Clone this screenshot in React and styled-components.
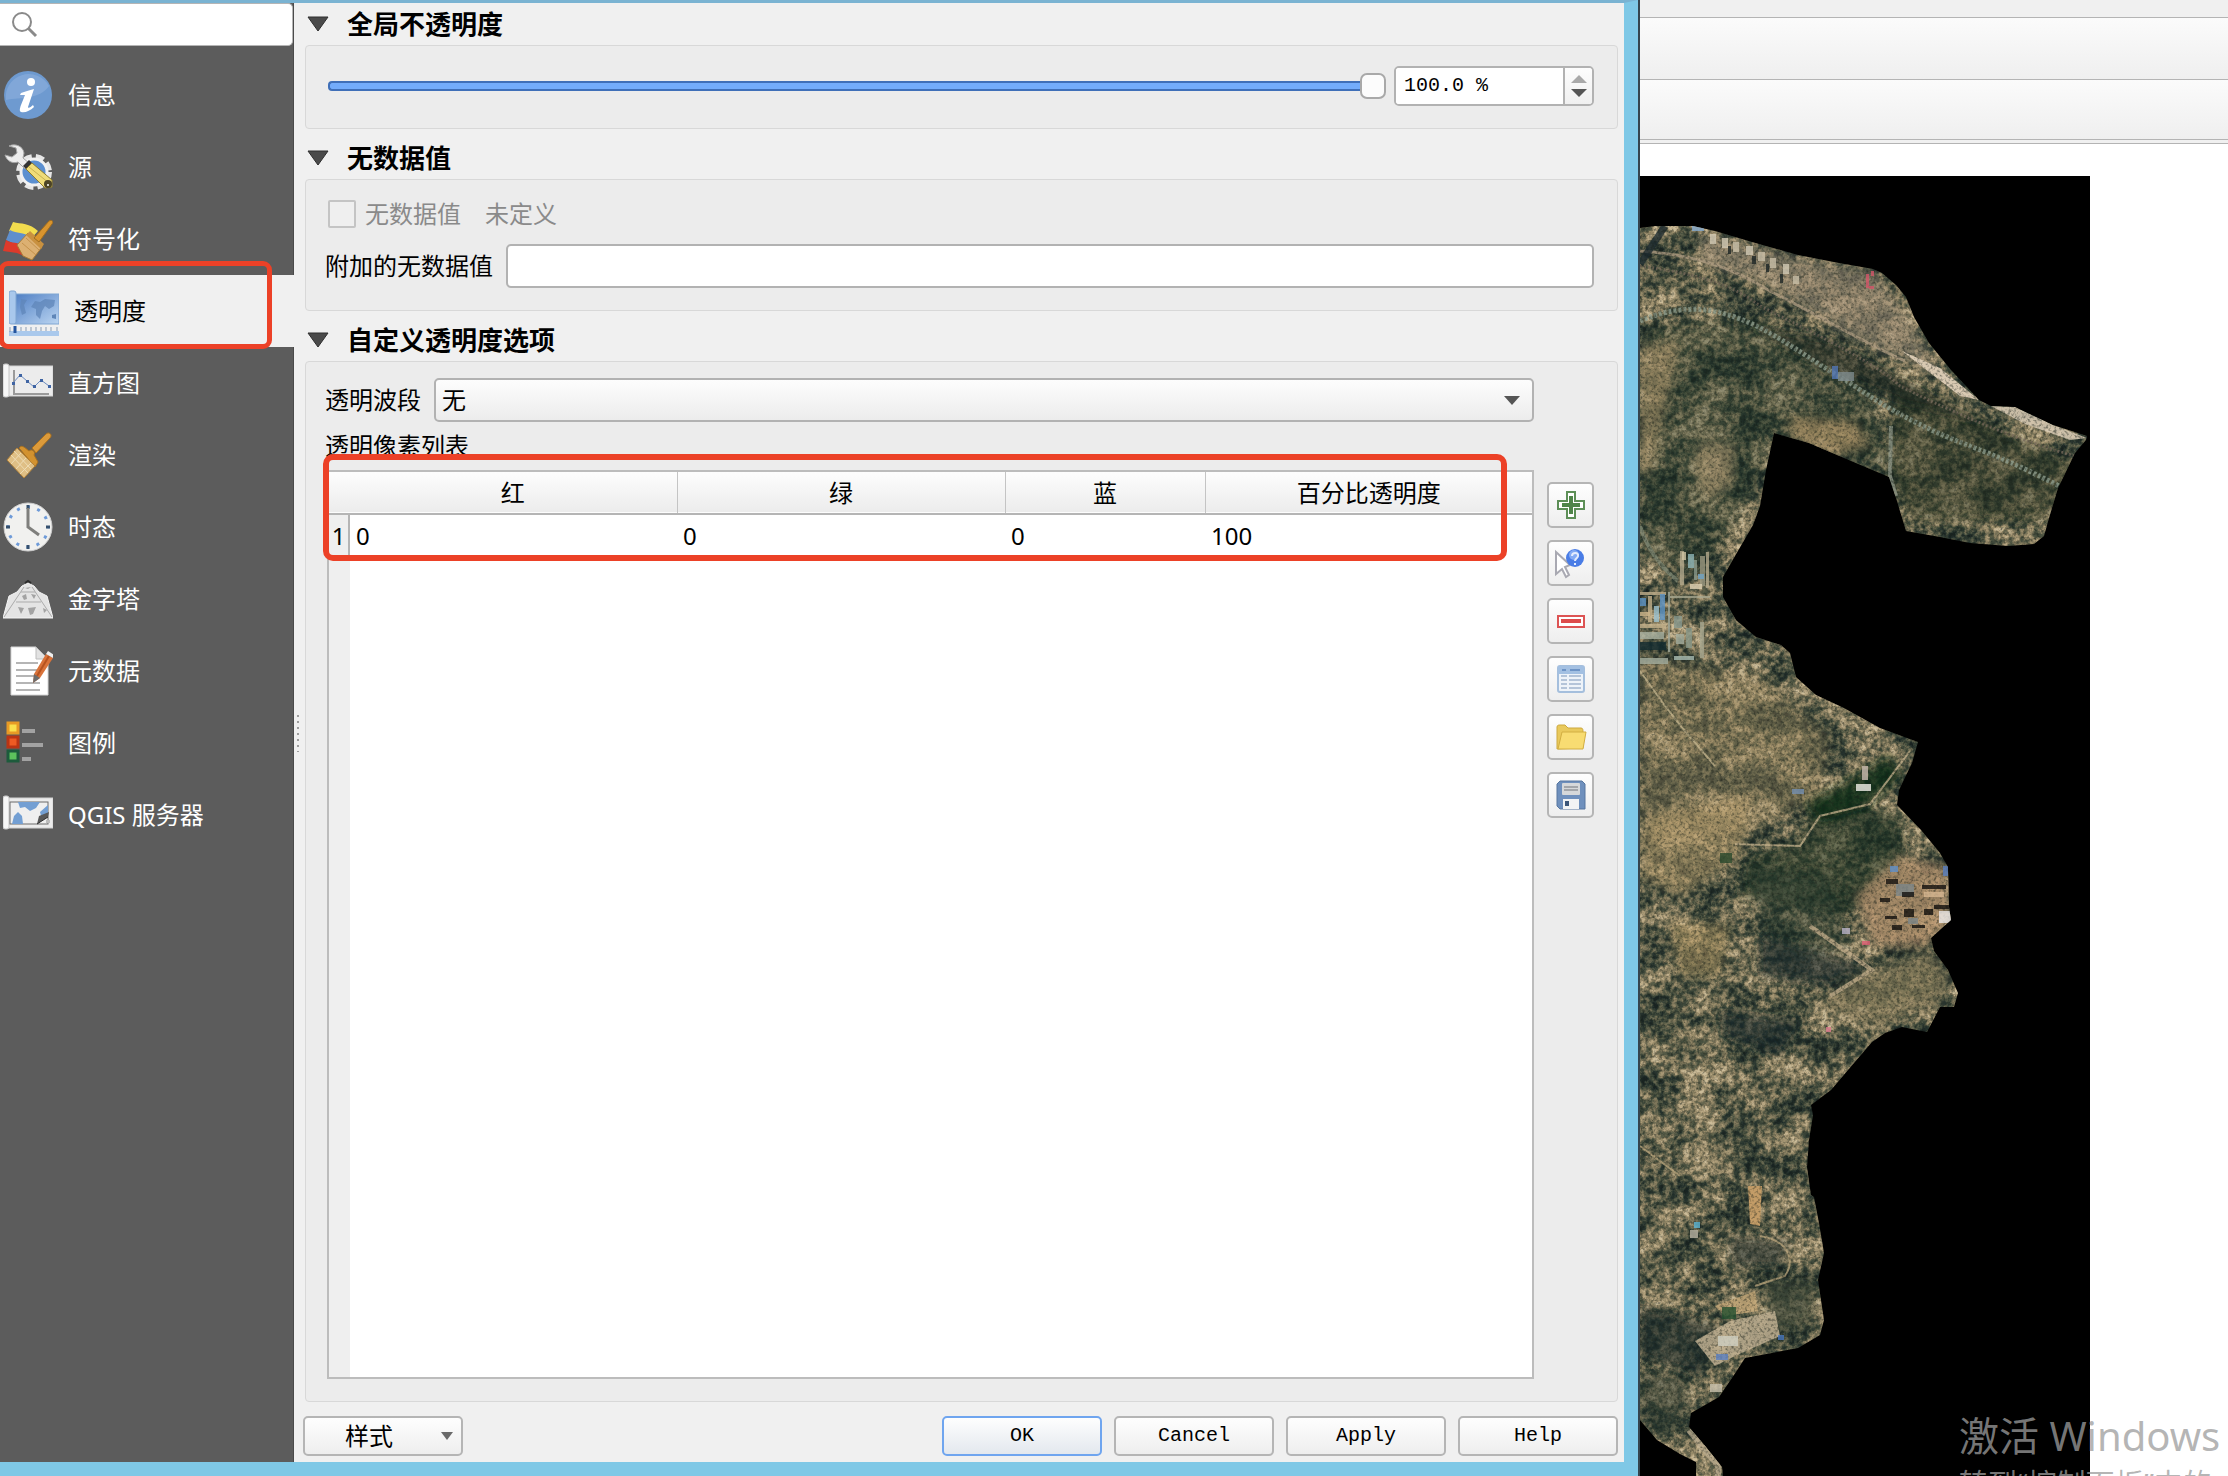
import { useState } from 'react';
import styled, { createGlobalStyle, css } from 'styled-components';

const GlobalStyle = createGlobalStyle`
    *, *::before, *::after {
        box-sizing: border-box;
    }

    body {
        margin: 0;
        overflow: hidden;
        background: #fff;
        color: #000;
        font-family: "Noto Sans", "Noto Sans CJK SC", sans-serif;
        font-size: 24px;
        line-height: 32px;
    }

    button, input, select {
        margin: 0;
        font: inherit;
        color: inherit;
    }
`

/* ---------- sidebar icons ---------- */

const Sheet = ({ children }) => (
    <>
        <path d="M6 8H50V38H4V8Z" fill="#ececec" stroke="#d2d2d2" />
        <rect x="0" y="6" width="6" height="33" rx="2" fill="#f7f7f7" stroke="#c6c6c6" />
        {children}
    </>
)

const icons = {
    info: (
        <>
            <circle cx="25" cy="25" r="24" fill="#6e9ad0" />
            <path d="M3 30A23 23 0 0 1 46 16C36 30 18 27 3 30Z" fill="#8db0de" opacity="0.6" />
            <circle cx="28" cy="12" r="4" fill="#fff" />
            <path d="M18 23C22 22 26 20 31 19L25 37C25 39 28 37 30 35L31 37C27 41 22 43 18 42C16 41 17 38 18 35L22 25L17 25Z" fill="#fff" />
        </>
    ),
    source: (
        <>
            <circle cx="31" cy="30" r="15" fill="none" stroke="#e6e6e6" strokeWidth="6" strokeDasharray="8 4" />
            <circle cx="31" cy="30" r="13" fill="#5b8fd0" stroke="#f1f1f1" strokeWidth="3" />
            <path d="M6 4C12 1 20 4 21 11L20 16L27 22L22 27L15 20C9 22 4 19 2 13L9 15L14 11L13 6Z" fill="#ececec" stroke="#a5a5a5" />
            <path d="M20 24L26 18L30 22L24 28Z" fill="#333" />
            <path d="M23 27L29 21L49 38L49 45L42 46Z" fill="#efdc79" stroke="#8f7d2f" />
            <path d="M26 25L46 41" stroke="#c9b24f" strokeWidth="1" />
            <circle cx="45" cy="42" r="4" fill="#4c4426" />
            <circle cx="45" cy="43" r="1" fill="#fff" />
        </>
    ),
    symbology: (
        <>
            <path d="M10 8C18 10 27 9 35 17L27 26L6 17Z" fill="#f2dc4e" />
            <path d="M7 16C14 20 20 17 28 24L20 34L3 26Z" fill="#5f8fcd" />
            <path d="M3 26C9 30 15 27 21 33L26 44L14 39L0 37Z" fill="#dd3a2b" />
            <path d="M14 31L25 19L39 33L29 46L20 42Z" fill="#dcb072" stroke="#a87b34" />
            <path d="M19 29L33 41M23 24L36 36" stroke="#c4924c" />
            <path d="M23 21L27 17L41 30L38 35Z" fill="#c99140" />
            <path d="M31 24L46 7C49 5 51 8 49 10L36 28Z" fill="#d9942e" stroke="#a06d1f" />
        </>
    ),
    transparency: (
        <>
            <defs>
                <linearGradient id="sky" x1="0" y1="0" x2="1" y2="1">
                    <stop offset="0" stopColor="#4f7fc4" />
                    <stop offset="1" stopColor="#bcd6f2" />
                </linearGradient>
            </defs>
            <rect x="6" y="8" width="44" height="30" fill="url(#sky)" stroke="#7fa5d2" />
            <path d="M22 21L26 15L31 16L36 13L46 14L45 20L40 23L36 20L33 25L31 33L27 29L27 23ZM12 13L18 14L15 19L17 27L13 29L11 21Z" fill="#5f86b8" opacity="0.75" />
            <path d="M43 29L47 28L47 33L43 32Z" fill="#5f86b8" />
            <rect x="0" y="5" width="7" height="33" rx="2" fill="#a9c8ec" stroke="#7fa5d2" />
            <rect x="0" y="45" width="50" height="5" fill="#aac9ec" />
            <path d="M1 41V46M12 41V45M17 41V45M22 41V45M27 41V45M32 41V45M37 41V45M42 41V45M48 41V45" stroke="#8a9db5" />
            <path d="M6 40V47" stroke="#24559f" strokeWidth="3" />
        </>
    ),
    histogram: (
        <Sheet>
            <path d="M11 12V36H46" fill="none" stroke="#9a9a9a" strokeWidth="2" />
            <path d="M10 25L17 17L24 23L31 29L38 22L46 28" fill="none" stroke="#6d8cc0" />
            <path d="M9 24h3v3h-3zM16 16h3v3h-3zM23 22h3v3h-3zM30 27h3v3h-3zM37 21h3v3h-3zM45 27h3v3h-3z" fill="#3f64a3" />
        </Sheet>
    ),
    rendering: (
        <>
            <path d="M29 18L43 4C46 1 50 5 47 8L33 23Z" fill="#dc9a3a" stroke="#a8701f" />
            <path d="M16 18C19 14 22 18 26 21C29 18 33 22 31 25L35 32L32 37Z" fill="#d3922f" stroke="#a8701f" />
            <path d="M14 18L32 36L21 48L4 30Z" fill="#dfbf85" stroke="#b28138" />
            <path d="M11 21L28 39M8 25L25 43M18 23L8 34M23 28L13 39M28 33L17 44" stroke="#eedcb4" />
        </>
    ),
    temporal: (
        <>
            <circle cx="25" cy="25" r="24" fill="#f1f1ef" stroke="#d0d0d0" />
            <circle cx="25" cy="25" r="20" fill="none" stroke="#6f9bd8" strokeWidth="3" strokeDasharray="3 7.47" strokeDashoffset="1.5" />
            <path d="M25 3v4M25 43v4M3 25h4M43 25h4" stroke="#35506e" strokeWidth="3" />
            <path d="M25 6V25L36 33" fill="none" stroke="#7f7f7c" strokeWidth="3" />
        </>
    ),
    pyramids: (
        <>
            <path d="M0 44L6 22L14 18L19 12L25 9L31 12L36 18L44 22L50 44Z" fill="#e4e4e4" stroke="#f4f4f4" />
            <path d="M22 9L25 7L28 9" fill="none" stroke="#2c2c2c" strokeWidth="2" />
            <path d="M1 43L21 13M49 43L29 13M13 28H38M18 18H32" fill="none" stroke="#ababab" />
            <path d="M19 22l4-2 1 5-3 1zM28 20l5 1-2 4zM15 33l6 1-3 6zM25 34l8-1-3 7-3 1zM40 34l4 2-3 3zM22 14l3 1 3-2" fill="#a3a3a3" />
        </>
    ),
    metadata: (
        <>
            <path d="M8 1H33L45 13V49H8Z" fill="#fff" stroke="#d6d6d6" />
            <path d="M33 1V13H45Z" fill="#e2e2e2" stroke="#bcbcbc" />
            <path d="M13 17H35M13 24H34M13 30H32M13 37H37M13 44H37" stroke="#b5b5b5" strokeWidth="2" />
            <path d="M43 8L50 12L37 32L30 37L31 28Z" fill="#d9733a" />
            <path d="M46 10L34 30" stroke="#b6521f" strokeWidth="2" />
            <path d="M43 8L45 5L51 9L50 12Z" fill="#efefef" />
            <path d="M31 28L37 32L30 37Z" fill="#6c6c6c" />
        </>
    ),
    legend: (
        <>
            <rect x="5" y="5" width="10" height="10" fill="#fbe04c" stroke="#e89a25" strokeWidth="3" />
            <rect x="5" y="19" width="10" height="10" fill="#ee5a23" stroke="#b93414" strokeWidth="3" />
            <rect x="5" y="33" width="10" height="10" fill="#5cc25c" stroke="#1d5b3c" strokeWidth="3" />
            <path d="M19 13H32M19 27H40M19 41H28" stroke="#a2a2a2" strokeWidth="4" />
        </>
    ),
    server: (
        <Sheet>
            <rect x="7" y="12" width="38" height="22" fill="#efefef" stroke="#6b6b6b" />
            <path d="M15 12H37L33 18L27 21L22 17L17 18ZM9 34L11 26L15 22L19 26L20 34ZM37 22L45 15V24L38 26Z" fill="#739fd3" />
            <path d="M34 34L36 26L46 22L45 27Z" fill="#585858" />
            <path d="M34 34L45 27" stroke="#2e2e2e" />
            <path d="M43 30H47V33H43Z" fill="#bdbdbd" />
        </Sheet>
    ),
}

/* ---------- tool button icons ---------- */

const tools = [
    {
        label: '添加',
        icon: (
            <>
                <path d="M10 1H18V10H27V18H18V27H10V18H1V10H10Z" fill="#fff" stroke="#5d8f57" strokeWidth="2" />
                <path d="M14 5V23M5 14H23" stroke="#4f8549" strokeWidth="4" />
            </>
        ),
    },
    {
        label: '拾取',
        icon: (
            <>
                <path d="M-1 3L13 16L8 18L12 26L9 28L5 20L-1 25Z" fill="#fff" stroke="#a9a9b2" strokeWidth="2" />
                <circle cx="18" cy="9" r="9" fill="#4a7de6" />
                <circle cx="17" cy="6" r="5" fill="#84abf5" />
                <path d="M15 7C15 3 22 3 21 7C21 9 18 9 18 12M18 14V16" fill="none" stroke="#e4ecfd" strokeWidth="2" />
            </>
        ),
    },
    {
        label: '删除',
        icon: (
            <>
                <rect x="1" y="9" width="26" height="11" fill="#fff" stroke="#dd5454" strokeWidth="2" />
                <path d="M4 14H24" stroke="#dd4b4b" strokeWidth="4" />
            </>
        ),
    },
    {
        label: '默认值',
        icon: (
            <>
                <rect x="1" y="1" width="26" height="26" rx="2" fill="#eef3f9" stroke="#a5bfdd" strokeWidth="2" />
                <path d="M1 1H27V9H1Z" fill="#a3c0e2" />
                <path d="M5 5H9M13 5H23" stroke="#6e94c6" strokeWidth="2" />
                <path d="M4 11H10M12 11H24M4 15H10M12 15H24M4 19H10M12 19H24M4 23H10M12 23H24" stroke="#b4c4d9" strokeWidth="2" />
            </>
        ),
    },
    {
        label: '打开',
        icon: (
            <>
                <path d="M0 26V4C0 2 2 2 3 2H8L11 5H24C26 5 26 7 26 9V25Z" fill="#e9c95c" stroke="#cda93e" />
                <path d="M1 26L5 9H29L26 26Z" fill="#f8dc72" stroke="#d2ae42" />
            </>
        ),
    },
    {
        label: '保存',
        icon: (
            <>
                <path d="M3 0H25L28 3V28H3L0 25V3Z" fill="#6f90bd" stroke="#58779f" />
                <rect x="5" y="2" width="18" height="12" rx="1" fill="#d6d8da" />
                <path d="M7 6H21M7 9H21" stroke="#a3a6aa" strokeWidth="2" />
                <rect x="6" y="18" width="16" height="10" fill="#f2f3f4" />
                <rect x="8" y="20" width="4" height="5" fill="#3c5678" />
            </>
        ),
    },
]

const menu = [
    { key: 'info', label: '信息' },
    { key: 'source', label: '源' },
    { key: 'symbology', label: '符号化' },
    { key: 'transparency', label: '透明度' },
    { key: 'histogram', label: '直方图' },
    { key: 'rendering', label: '渲染' },
    { key: 'temporal', label: '时态' },
    { key: 'pyramids', label: '金字塔' },
    { key: 'metadata', label: '元数据' },
    { key: 'legend', label: '图例' },
    { key: 'server', label: 'QGIS 服务器' },
]

const Sidebar = () => (
    <SidebarWrapper>
        <SearchBox>
            <svg width="26" height="26" viewBox="0 0 26 26" fill="none" stroke="#8a8a8a">
                <circle cx="10" cy="10" r="9" strokeWidth="2" />
                <path d="M16 16L24 24" strokeWidth="3" />
            </svg>
            <input type="search" aria-label="搜索" />
        </SearchBox>
        <Menu>
            {menu.map(item => (
                <MenuItem key={item.key} $active={item.key === 'transparency'}>
                    <a href={`#${item.key}`}>
                        <svg width="50" height="50" viewBox="0 0 50 50">{icons[item.key]}</svg>
                        {item.label}
                    </a>
                </MenuItem>
            ))}
        </Menu>
    </SidebarWrapper>
)

const Section = ({ title, grow, children }) => (
    <>
        <SectionTitle>
            <svg width="22" height="16" viewBox="0 0 22 16">
                <path d="M1 1H21L11 15Z" fill="#4a4a4a" stroke="#2f2f2f" />
            </svg>
            {title}
        </SectionTitle>
        <Group $grow={grow}>{children}</Group>
    </>
)

const PixelTable = () => (
    <TableFrame>
        <table>
            <colgroup>
                <col width="20" />
                <col width="328" />
                <col width="328" />
                <col width="200" />
                <col />
            </colgroup>
            <thead>
                <tr>
                    <td></td>
                    <th>红</th>
                    <th>绿</th>
                    <th>蓝</th>
                    <th>百分比透明度</th>
                </tr>
            </thead>
            <tbody>
                <tr>
                    <th>1</th>
                    <td>0</td>
                    <td>0</td>
                    <td>0</td>
                    <td>100</td>
                </tr>
            </tbody>
        </table>
        <TableMark />
    </TableFrame>
)

/* ---------- satellite map ---------- */

const outline = `M0 52L15 50L53 50L75 55L112 66L158 79L199 87L233 93L242 97L256 109L266 121L274 141L289 167L311 194
    L339 224L351 230L375 231L413 249L447 260L446 264L435 277L418 312L409 342L404 360L394 368L368 370L330 367L300 361
    L266 355L257 325L249 301L204 282L169 267L134 257L126 294L120 330L113 349L95 380L83 401L83 421L96 444L116 461
    L141 469L150 477L156 501L176 519L204 532L240 552L278 566L272 587L259 614L257 629L281 654L300 677L308 691L309 731
    L311 744L302 752L291 762L294 775L308 794L318 817L314 831L300 831L287 856L262 851L245 857L232 866L214 887L191 914
    L171 929L173 939L169 964L167 991L171 1019L174 1021L179 1047L184 1077L178 1104L184 1144L180 1159L158 1172L105 1182
    L94 1199L79 1221L51 1237L49 1251L66 1271L82 1291L83 1300H56V1286L40 1278L17 1264L0 1244Z`

const patches = [
    // green hills
    { d: 'M10 150L120 140L230 215L260 300L140 260L100 340L60 400L0 380V200Z', fill: '#223528', opacity: 0.35 },
    { d: 'M255 205L440 290L405 345L270 345L250 300Z', fill: '#2a3624', opacity: 0.5 },
    { d: 'M110 150L190 165L300 225L350 250L260 225L180 190Z', fill: '#18211b', opacity: 0.6 },
    { d: 'M180 620L260 640L265 700L200 740L100 720L110 680L160 665Z', fill: '#1b3020', opacity: 0.55 },
    { d: 'M110 690L190 700L210 770L150 790L120 750Z', fill: '#22342a', opacity: 0.45 },
    { d: 'M190 615L250 580L260 600L225 632L180 645L165 625Z', fill: '#0f2e12', opacity: 0.75 },
    { d: 'M120 760L230 790L190 810L120 800ZM80 835L160 845L140 880L85 860Z', fill: '#17282a', opacity: 0.6 },
    { d: 'M0 1130L80 1150L60 1200L0 1180ZM90 1060L150 1065L140 1090L92 1090Z', fill: '#1c2c2a', opacity: 0.6 },
    { d: 'M125 1105L175 1105L172 1150L130 1155Z', fill: '#3c4737', opacity: 0.7 },
    { d: 'M0 1195L45 1200L50 1235L20 1260L0 1240Z', fill: '#20322c', opacity: 0.5 },
    // bare soil
    { d: 'M60 58L158 82L235 97L268 140L300 200L210 160L120 105L60 85Z', fill: '#a3927a', opacity: 0.6 },
    { d: 'M0 170L40 165L30 210L10 300L0 290Z', fill: '#bfa274', opacity: 0.5 },
    { d: 'M60 265L95 268L92 310L65 325L55 290Z', fill: '#b39c74', opacity: 0.6 },
    { d: 'M150 240L215 245L232 270L190 280L150 262Z', fill: '#b8996a', opacity: 0.6 },
    { d: 'M0 480L120 500L190 560L180 620L100 660L0 670Z', fill: '#a08c63', opacity: 0.4 },
    { d: 'M10 640L110 620L100 680L40 720L0 700Z', fill: '#bfa36f', opacity: 0.5 },
    { d: 'M30 745L90 750L80 800L40 800Z', fill: '#c0a26b', opacity: 0.5 },
    { d: 'M215 720L260 680L305 690L310 745L285 770L235 770Z', fill: '#bd9872', opacity: 0.75 },
    { d: 'M210 805L290 775L310 800L300 825L240 850L180 830Z', fill: '#8b7f5d', opacity: 0.6 },
    { d: 'M108 1010L122 1010L120 1050L110 1048Z', fill: '#c39c67', opacity: 1 },
    { d: 'M55 1165L90 1145L135 1135L140 1160L95 1180L75 1190Z', fill: '#c2b193', opacity: 0.85 },
    { d: 'M75 1130L115 1115L118 1135L85 1140Z', fill: '#c4a878', opacity: 0.8 },
    { d: 'M262 175L300 192L339 224L320 220Z', fill: '#d9c9b2', opacity: 1 },
    { d: 'M351 230L375 231L413 249L447 262L430 264L385 248Z', fill: '#dbcdb6', opacity: 0.85 },
]

const roads = [
    { d: 'M0 145C30 132 60 130 85 138C130 150 170 185 210 207C250 235 290 255 330 270C370 285 400 300 425 313', stroke: '#8d9c8c', width: 5, dash: '3 2' },
    { d: 'M0 75C50 78 90 90 130 115C180 140 230 170 265 185', stroke: '#ab9a80', width: 3 },
    { d: 'M0 90C60 98 95 110 120 130C180 160 240 190 260 210C320 240 380 265 435 280', stroke: '#75695a', width: 3, dash: '2 2' },
    { d: 'M251 250L250 300L256 320', stroke: '#8c9484', width: 4 },
    { d: 'M0 350C8 375 22 392 38 405', stroke: '#7d8672', width: 4 },
    { d: 'M0 495L25 530L45 555L75 590', stroke: '#c0b18b', width: 2 },
    { d: 'M95 668L160 670L180 640L230 628L270 575', stroke: '#c0ae8a', width: 2 },
    { d: 'M170 750L232 794L190 820', stroke: '#bda987', width: 4 },
    { d: 'M0 970L40 1000M120 1060C150 1065 155 1085 145 1100L115 1110', stroke: '#b7a37b', width: 2 },
    { d: 'M49 1254L78 1290V1300', stroke: '#b8a98c', width: 6 },
    { d: 'M25 50L0 88', stroke: '#1d2b30', width: 7 },
]

// [x, y, w, h, colour]
const buildings = [
    [70, 58, 6, 10, '#d3cab5'], [82, 62, 6, 10, '#d3cab5'], [93, 66, 6, 10, '#c9bfa8'], [106, 70, 7, 9, '#d3cab5'],
    [118, 76, 7, 9, '#c9bfa8'], [130, 82, 6, 10, '#c9bfa8'], [143, 88, 6, 10, '#d3cab5'], [153, 100, 6, 8, '#c9bfa8'],
    [88, 70, 3, 8, '#1b2424'], [112, 80, 4, 8, '#1b2424'], [126, 88, 3, 8, '#1b2424'], [140, 98, 3, 9, '#1b2424'],
    [226, 98, 3, 14, '#d5576a'], [231, 95, 3, 5, '#d5576a'], [229, 110, 5, 3, '#d5576a'], [192, 190, 6, 13, '#5277b5'],
    [198, 196, 16, 9, '#7d8a8c'], [52, 50, 12, 5, '#7fa6cc'],
    [40, 375, 4, 34, '#b3a98c'], [48, 378, 6, 14, '#8fb5b7'], [60, 380, 5, 30, '#9a977f'], [50, 408, 12, 5, '#dccfb2'],
    [42, 376, 4, 8, '#d0c4a4'], [54, 384, 3, 20, '#8b9a8b'], [66, 376, 3, 36, '#b3a98c'], [58, 398, 6, 5, '#6fa3c4'],
    [0, 416, 26, 3, '#bfae8b'], [20, 418, 5, 26, '#5b93c7'], [0, 422, 6, 8, '#5b93c7'], [14, 430, 5, 16, '#9bc2cf'],
    [8, 420, 4, 26, '#c6b38c'], [0, 436, 10, 4, '#cbb48a'], [28, 416, 2, 60, '#9fa89a'], [30, 420, 40, 2, '#a7a890'],
    [0, 448, 26, 4, '#c6b38c'], [0, 456, 24, 7, '#a7b0a0'], [0, 466, 26, 8, '#132a30'], [34, 440, 8, 12, '#87998e'],
    [46, 452, 6, 20, '#8b9a8b'], [36, 458, 8, 10, '#a2ad9e'], [60, 446, 4, 36, '#a7a890'], [0, 482, 28, 6, '#a7b0a0'],
    [34, 480, 20, 4, '#a9bcb1'],
    [216, 608, 15, 7, '#f1efe9'], [222, 590, 6, 14, '#cbbcb0'], [152, 613, 12, 5, '#7590b0'], [80, 677, 12, 10, '#2a4a2d'],
    [250, 690, 8, 6, '#5f8fc8'], [303, 690, 5, 10, '#5a7fc0'], [256, 708, 18, 12, '#7c8688'], [246, 703, 12, 5, '#14110f'],
    [240, 722, 10, 4, '#14110f'], [262, 716, 12, 5, '#14110f'], [282, 709, 24, 4, '#14110f'], [264, 733, 10, 8, '#14110f'],
    [284, 733, 9, 6, '#14110f'], [245, 740, 12, 3, '#14110f'], [252, 749, 10, 5, '#14110f'], [272, 749, 13, 3, '#14110f'],
    [294, 729, 16, 4, '#14110f'], [299, 735, 12, 12, '#ebe9e8'], [268, 742, 10, 6, '#7c8688'], [284, 716, 20, 5, '#d6b791'],
    [202, 752, 8, 6, '#b9b3c8'], [222, 765, 8, 4, '#d95a70'], [186, 851, 5, 5, '#d9798c'], [54, 1046, 6, 6, '#5fb6d4'],
    [50, 1054, 8, 8, '#b9b3a3'], [82, 1131, 14, 12, '#245030'], [76, 1178, 12, 6, '#5b7fc0'], [138, 1159, 6, 5, '#4a78bd'],
    [78, 1160, 20, 10, '#cfcfc2'], [70, 1208, 12, 8, '#c8c1ad'],
]

const SatelliteMap = () => (
    <svg width="450" height="1300" viewBox="0 0 450 1300" role="img" aria-label="卫星影像">
        <defs>
            <filter id="terrain" x="0" y="0" width="100%" height="100%" colorInterpolationFilters="sRGB">
                <feTurbulence type="fractalNoise" baseFrequency="0.024 0.034" numOctaves="5" seed="11" />
                <feColorMatrix values="2.6 0 0 0 -0.8  2.6 0 0 0 -0.8  2.6 0 0 0 -0.8  0 0 0 0 1" result="hills" />
                <feTurbulence type="fractalNoise" baseFrequency="0.16" numOctaves="4" seed="4" />
                <feColorMatrix values="2.6 0 0 0 -0.8  2.6 0 0 0 -0.8  2.6 0 0 0 -0.8  0 0 0 0 1" result="grain" />
                <feComposite in="hills" in2="grain" operator="arithmetic" k2="0.5" k3="0.5" />
                <feComponentTransfer>
                    <feFuncR type="table" tableValues="0.1 0.15 0.23 0.34 0.46 0.59 0.71 0.8" />
                    <feFuncG type="table" tableValues="0.14 0.2 0.27 0.36 0.44 0.54 0.64 0.74" />
                    <feFuncB type="table" tableValues="0.13 0.18 0.22 0.28 0.34 0.41 0.5 0.6" />
                </feComponentTransfer>
            </filter>
            <filter id="grainy" x="0" y="0" width="100%" height="100%" colorInterpolationFilters="sRGB">
                <feTurbulence type="fractalNoise" baseFrequency="0.35" numOctaves="2" seed="21" />
                <feColorMatrix values="0 0 0 0 0.1  0 0 0 0 0.13  0 0 0 0 0.1  3 0 0 0 -1.4" />
            </filter>
            <filter id="soft">
                <feGaussianBlur stdDeviation="5" />
            </filter>
            <clipPath id="coverage">
                <path d={outline} />
            </clipPath>
        </defs>
        <rect width="450" height="1300" fill="#000" />
        <g clipPath="url(#coverage)">
            <rect width="450" height="1300" filter="url(#terrain)" />
            {patches.map((p, i) => (
                <path key={i} d={p.d} fill={p.fill} opacity={p.opacity} filter={p.opacity < 0.8 ? 'url(#soft)' : undefined} />
            ))}
            {roads.map((r, i) => (
                <path key={i} d={r.d} fill="none" stroke={r.stroke} strokeWidth={r.width} strokeDasharray={r.dash} opacity="0.8" />
            ))}
            <rect width="450" height="1300" filter="url(#grainy)" opacity="0.5" />
            {buildings.map(([x, y, w, h, fill], i) => (
                <rect key={i} x={x} y={y} width={w} height={h} fill={fill} opacity="0.8" />
            ))}
        </g>
    </svg>
)

const App = () => {
    const [opacity, setOpacity] = useState(100);

    return (
        <Desktop>
            <GlobalStyle />
            <Dialog>
                <Sidebar />
                <Splitter>
                    <svg width="4" height="38" viewBox="0 0 4 38">
                        <path d="M1 1V38" stroke="#9d9d9d" strokeWidth="2" strokeDasharray="2 4" />
                    </svg>
                </Splitter>
                <Pane>
                    <Section title="全局不透明度">
                        <OpacityRow>
                            <Slider
                                type="range"
                                aria-label="不透明度"
                                min="0"
                                max="100"
                                value={opacity}
                                onChange={e => setOpacity(Number(e.target.value))}
                            />
                            <SpinBox>
                                <input type="text" aria-label="不透明度百分比" value={`${opacity.toFixed(1)} %`} readOnly />
                                <div>
                                    <StepButton aria-label="增加" onClick={() => setOpacity(Math.min(100, opacity + 1))}>
                                        <svg width="16" height="8" viewBox="0 0 16 8"><path d="M0 8L8 0L16 8Z" fill="#a9a9a9" /></svg>
                                    </StepButton>
                                    <StepButton aria-label="减少" onClick={() => setOpacity(Math.max(0, opacity - 1))}>
                                        <svg width="16" height="8" viewBox="0 0 16 8"><path d="M0 0H16L8 8Z" fill="#555" /></svg>
                                    </StepButton>
                                </div>
                            </SpinBox>
                        </OpacityRow>
                    </Section>

                    <Section title="无数据值">
                        <NoDataRow>
                            <input type="checkbox" id="nodata" disabled />
                            <label htmlFor="nodata">无数据值</label>
                            <span>未定义</span>
                        </NoDataRow>
                        <FieldRow>
                            <label htmlFor="extra">附加的无数据值</label>
                            <TextField id="extra" type="text" />
                        </FieldRow>
                    </Section>

                    <Section title="自定义透明度选项" grow>
                        <Custom>
                            <PixelArea>
                                <FieldRow>
                                    <label htmlFor="band">透明波段</label>
                                    <SelectBox>
                                        <select id="band">
                                            <option>无</option>
                                        </select>
                                        <svg width="16" height="9" viewBox="0 0 16 9"><path d="M0 0H16L8 9Z" fill="#555" /></svg>
                                    </SelectBox>
                                </FieldRow>
                                <ListLabel>透明像素列表</ListLabel>
                                <PixelTable />
                            </PixelArea>
                            <Tools>
                                {tools.map(tool => (
                                    <ToolButton key={tool.label} aria-label={tool.label}>
                                        <svg width="28" height="28" viewBox="0 0 28 28" overflow="visible">{tool.icon}</svg>
                                    </ToolButton>
                                ))}
                            </Tools>
                        </Custom>
                    </Section>

                    <Footer>
                        <StyleButton>
                            <span>样式</span>
                            <svg width="12" height="8" viewBox="0 0 12 8"><path d="M0 0H12L6 8Z" fill="#6a6a6a" /></svg>
                        </StyleButton>
                        <DialogButton $primary>OK</DialogButton>
                        <DialogButton>Cancel</DialogButton>
                        <DialogButton>Apply</DialogButton>
                        <DialogButton>Help</DialogButton>
                    </Footer>
                </Pane>
            </Dialog>
            <MapWindow>
                <Toolbar $height={18} $flat />
                <Toolbar $height={62} />
                <Toolbar $height={60} />
                <Toolbar $height={4} $flat />
                <Canvas>
                    <SatelliteMap />
                </Canvas>
                <Watermark>
                    <h2>激活 Windows</h2>
                    <p>转到“控制面板”中的</p>
                </Watermark>
            </MapWindow>
        </Desktop>
    );
}

const Desktop = styled.div`
    display: grid;
    grid-template-columns: minmax(0, 1fr) 590px;
    height: 100vh;
    overflow: hidden;
`

const Dialog = styled.div`
    display: grid;
    grid-template-columns: 294px 11px minmax(0, 1fr);
    min-height: 0;
    background: #f0f0f0;
    border: solid #7fc8e6;
    border-width: 3px 14px 14px 0;
    border-top-color: #7ab3d2;
    box-shadow: 2px 0 0 #35444d;
    z-index: 1;
`

const SidebarWrapper = styled.div`
    background: #5c5c5c;
    border-right: 1px solid #4a4a4a;
`

const SearchBox = styled.div`
    display: flex;
    align-items: center;
    height: 43px;
    padding-left: 12px;
    background: #fff;
    border: 1px solid #b5b5b5;
    border-left: 0;
    border-radius: 0 5px 5px 0;

    input {
        flex: 1;
        min-width: 0;
        border: 0;
        outline: 0;
        background: none;
    }
`

const Menu = styled.ul`
    margin: 13px 0 0;
    padding: 0;
    list-style: none;
`

const MenuItem = styled.li`
    a {
        display: flex;
        align-items: center;
        gap: 15px;
        height: 72px;
        padding-left: 3px;
        color: #fff;
        text-decoration: none;
    }

    ${props => props.$active && css`
        position: relative;
        margin-right: -1px;
        background: #f0f0f0;

        a {
            padding-left: 9px;
            color: #000;
        }

        &::after {
            content: '';
            position: absolute;
            top: -14px;
            left: -1px;
            width: 273px;
            height: 88px;
            border: 5px solid #ec4127;
            border-radius: 9px;
        }
    `}
`

const Splitter = styled.div`
    display: flex;
    align-items: center;
    padding-left: 3px;
`

const Pane = styled.div`
    display: flex;
    flex-direction: column;
    min-height: 0;
    padding-right: 6px;
`

const SectionTitle = styled.h3`
    display: flex;
    align-items: center;
    gap: 18px;
    height: 42px;
    margin: 8px 0 0;
    padding-left: 2px;
    font-size: 26px;
    font-weight: 700;

    &:first-child {
        margin-top: 0;
    }
`

const Group = styled.section`
    display: flex;
    flex-direction: column;
    gap: 16px;
    padding: 20px 23px 22px 19px;
    background: #ececec;
    border: 1px solid #d8d8d8;
    border-radius: 4px;
    ${props => props.$grow && css`
        flex: 1;
        min-height: 0;
        padding-top: 16px;
    `}
`

const OpacityRow = styled.div`
    display: flex;
    align-items: center;
    gap: 8px;
    padding-left: 3px;
`

const Slider = styled.input`
    flex: 1;
    height: 26px;
    appearance: none;
    background: none;

    &::-webkit-slider-runnable-track {
        height: 10px;
        background: #73acfb;
        border: 2px solid #3f6fb8;
        border-right: 0;
        border-radius: 4px;
    }

    &::-webkit-slider-thumb {
        appearance: none;
        width: 26px;
        height: 26px;
        margin-top: -10px;
        background: #fcfcfc;
        border: 2px solid #a9a9a9;
        border-radius: 7px;
    }
`

const SpinBox = styled.div`
    display: flex;
    width: 200px;
    height: 40px;
    background: #fff;
    border: 2px solid #b2b2b2;
    border-radius: 5px;
    overflow: hidden;

    input {
        flex: 1;
        min-width: 0;
        padding: 0 8px;
        border: 0;
        outline: 0;
        font-family: "Liberation Mono", monospace;
        font-size: 20px;
    }

    div {
        display: flex;
        flex-direction: column;
        justify-content: center;
        gap: 6px;
        width: 29px;
        background: linear-gradient(#fdfdfd, #f0f0f0);
        border-left: 2px solid #b2b2b2;
    }
`

const StepButton = styled.button`
    display: flex;
    justify-content: center;
    padding: 0;
    border: 0;
    background: none;
`

const NoDataRow = styled.div`
    display: flex;
    align-items: center;
    height: 28px;
    padding-left: 3px;
    color: #8a8a8a;

    input {
        width: 28px;
        height: 28px;
        margin-right: 9px;
        appearance: none;
        background: #efefef;
        border: 2px solid #c4c4c4;
        border-radius: 2px;
    }

    span {
        margin-left: 24px;
    }
`

const FieldRow = styled.div`
    display: flex;
    align-items: center;
    gap: 13px;
`

const TextField = styled.input`
    flex: 1;
    min-width: 0;
    height: 44px;
    padding: 0 8px;
    background: #fff;
    border: 2px solid #b2b2b2;
    border-radius: 5px;
`

const Custom = styled.div`
    display: flex;
    flex: 1;
    gap: 13px;
    min-height: 0;
`

const PixelArea = styled.div`
    display: flex;
    flex: 1;
    flex-direction: column;
    min-width: 0;
`

const SelectBox = styled.div`
    display: flex;
    flex: 1;
    align-items: center;

    select {
        flex: 1;
        height: 44px;
        margin-right: -30px;
        padding: 0 6px;
        appearance: none;
        background: linear-gradient(#fdfdfd, #ececec);
        border: 2px solid #b2b2b2;
        border-radius: 5px;
    }

    svg {
        width: 16px;
        margin-right: 14px;
        z-index: 1;
    }
`

const ListLabel = styled.div`
    height: 48px;
    padding-top: 8px;
`

const TableFrame = styled.div`
    position: relative;
    flex: 1;
    margin-left: 2px;
    background: linear-gradient(to right, #efefef 21px, #fff 21px);
    border: 2px solid #bcbcbc;

    table {
        width: 100%;
        table-layout: fixed;
        border-collapse: collapse;
    }

    th, td {
        height: 42px;
        padding: 0 6px;
        text-align: left;
        font-weight: 400;
    }

    thead tr {
        background: linear-gradient(#fdfdfd, #ececec);
        border-bottom: 2px solid #b5b5b5;
    }

    thead th {
        text-align: center;
        border-right: 1px solid #c4c4c4;

        &:last-child {
            border-right: 0;
        }
    }

    tbody th {
        padding: 0;
        text-align: center;
        border-right: 2px solid #b5b5b5;
    }
`

const TableMark = styled.div`
    position: absolute;
    top: -18px;
    right: 25px;
    left: -6px;
    height: 107px;
    border: 6px solid #ec4127;
    border-radius: 10px;
`

const Tools = styled.div`
    display: flex;
    flex-direction: column;
    gap: 12px;
    padding-top: 104px;
`

const buttonFace = css`
    display: flex;
    align-items: center;
    justify-content: center;
    padding: 0;
    background: linear-gradient(#fefefe, #eeeeee);
    border: 2px solid #b5b5b5;
    border-radius: 5px;
`

const ToolButton = styled.button`
    ${buttonFace}
    width: 47px;
    height: 46px;
`

const Footer = styled.div`
    display: flex;
    gap: 12px;
    margin-left: -2px;
    padding: 14px 0 6px;
`

const DialogButton = styled.button`
    ${buttonFace}
    width: 160px;
    height: 40px;
    font-family: "Liberation Mono", monospace;
    font-size: 20px;
    ${props => props.$primary && css`
        background: linear-gradient(#fefefe, #e3e8ee);
        border-color: #6fa5ef;
    `}
`

const StyleButton = styled.button`
    ${buttonFace}
    justify-content: space-between;
    width: 160px;
    height: 40px;
    margin-right: auto;
    padding: 0 8px 0 40px;
`

const MapWindow = styled.div`
    display: flex;
    flex-direction: column;
    position: relative;
    min-height: 0;
    padding-left: 2px;
    overflow: hidden;
    background: #fff;
`

const Toolbar = styled.div`
    flex: none;
    height: ${props => props.$height}px;
    background: ${props => props.$flat ? '#f0f0f0' : 'linear-gradient(#fbfbfb, #efefef)'};
    border-bottom: 1px solid #b4b4b4;
`

const Canvas = styled.div`
    padding-top: 32px;

    svg {
        display: block;
    }
`

const Watermark = styled.div`
    position: absolute;
    top: 1406px;
    left: 321px;
    color: rgba(157, 157, 157, 0.76);
    white-space: nowrap;

    h2 {
        margin: 0;
        font-size: 40px;
        font-weight: 400;
        line-height: 60px;
    }

    p {
        margin: 0;
        font-size: 29px;
        line-height: 36px;
    }
`

export default App;
